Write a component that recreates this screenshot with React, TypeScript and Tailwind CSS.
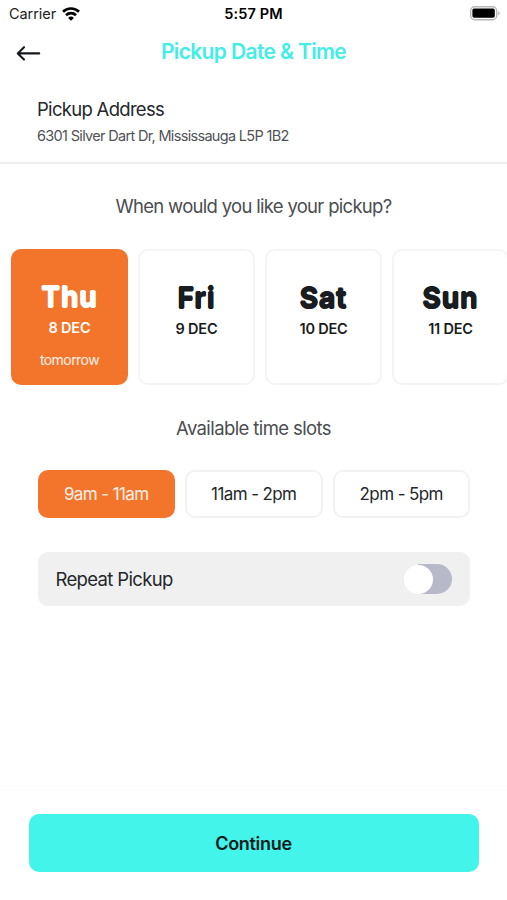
import { useState } from 'react'

const days = [
  { name: 'Thu', date: '8 DEC', note: 'tomorrow' },
  { name: 'Fri', date: '9 DEC' },
  { name: 'Sat', date: '10 DEC' },
  { name: 'Sun', date: '11 DEC' },
]

const slots = ['9am - 11am', '11am - 2pm', '2pm - 5pm']

function WifiIcon() {
  return (
    <svg width="18" height="14" viewBox="0 0 18 14" fill="none" stroke="#000" strokeWidth="2.7">
      <path d="M1 4.8a11.3 11.3 0 0 1 16 0" />
      <path d="M4 8.2a7.1 7.1 0 0 1 10 0" />
      <path d="M9 13.8 6.1 10.9a4.1 4.1 0 0 1 5.8 0Z" fill="#000" stroke="none" />
    </svg>
  )
}

function BatteryIcon() {
  return (
    <svg width="31" height="15" viewBox="0 0 31 15" fill="none">
      <rect x="0.7" y="0.7" width="26" height="13" rx="4" stroke="#b8b8b8" strokeWidth="1.4" />
      <rect x="2.4" y="2.5" width="22.4" height="9.2" rx="1.8" fill="#000" />
      <path d="M28.2 5.2v4.2c1.9-.7 1.9-3.5 0-4.2Z" fill="#b0b0b0" />
    </svg>
  )
}

function StatusBar() {
  return (
    <div className="grid h-7 grid-cols-3 items-center text-black">
      <div className="flex items-center gap-[6px] pl-[9px]">
        <span className="text-[14.5px] tracking-[-0.06px] text-[#222]">Carrier</span>
        <WifiIcon />
      </div>
      <span className="text-center text-[14.5px] font-semibold tracking-[0.15px]">5:57 PM</span>
      <div className="flex justify-end pr-[6px] pb-px">
        <BatteryIcon />
      </div>
    </div>
  )
}

function Header() {
  return (
    <header className="grid h-[52px] grid-cols-[60px_1fr_60px]">
      <button aria-label="Back" className="flex h-[50px] items-center pl-4">
        <svg width="25" height="16" viewBox="0 0 25 16" fill="none" stroke="#15181c" strokeWidth="2.1" strokeLinecap="round" strokeLinejoin="round">
          <path d="M23.2 8.4H1.8M8 2.2 1.8 8.4 8 14.6" />
        </svg>
      </button>
      <h1 className="pt-[10px] text-center text-[21px] leading-7 font-semibold tracking-[-0.63px] text-[#42eee6]">
        Pickup Date &amp; Time
      </h1>
    </header>
  )
}

export default function App() {
  const [day, setDay] = useState('Thu')
  const [slot, setSlot] = useState(slots[0])
  const [repeat, setRepeat] = useState(false)

  return (
    <div className="flex h-[900px] w-[507px] flex-col overflow-hidden bg-white font-['Inter',sans-serif] text-[#24272b]">
      <StatusBar />
      <Header />

      <section className="h-[84px] border-b-2 border-[#eeeeee] pt-[17px] pl-[37px]">
        <h2 className="text-[18.5px] leading-6 tracking-[-0.7px]">Pickup Address</h2>
        <p className="mt-[5px] text-[14.5px] leading-5 tracking-[-0.68px] text-[#515356]">
          6301 Silver Dart Dr, Mississauga L5P 1B2
        </p>
      </section>

      <h3 className="mt-[28px] text-center text-[18.5px] leading-7 tracking-[-0.7px] text-[#4b4d50]">
        When would you like your pickup?
      </h3>

      <div className="mt-[29px] flex gap-[10px] pl-[11px]">
        {days.map((d) => (
          <button
            key={d.name}
            onClick={() => setDay(d.name)}
            className={`flex h-[136px] w-[117px] shrink-0 flex-col items-center rounded-[10px] border-2 ${
              day === d.name
                ? 'border-[#f3752b] bg-[#f3752b] pt-[30px] text-white'
                : 'border-[#f4f4f4] bg-white pt-[31px] text-[#191c21]'
            }`}
          >
            {/* the ring of shadows thickens the glyphs and rounds their corners */}
            <span className="text-[28px] leading-8 font-bold tracking-[0.9px] [text-shadow:0.7px_0_currentColor,-0.7px_0_currentColor,0_0.7px_currentColor,0_-0.7px_currentColor]">
              {d.name}
            </span>
            <span className="mt-[5px] text-[14.5px] leading-5 font-semibold tracking-[-0.2px]">{d.date}</span>
            {d.note && <span className="mt-3 text-[14px] leading-5 tracking-[-0.55px] text-white/90">{d.note}</span>}
          </button>
        ))}
      </div>

      <h3 className="mt-[29px] text-center text-[18.5px] leading-7 tracking-[-0.6px] text-[#4b4d50]">Available time slots</h3>

      <div className="mt-7 grid grid-cols-3 gap-[10px] pr-[37px] pl-[37.5px]">
        {slots.map((s) => (
          <button
            key={s}
            onClick={() => setSlot(s)}
            className={`h-12 rounded-[10px] border-2 pt-px text-[17px] tracking-[-0.6px] ${
              slot === s ? 'border-[#f3752b] bg-[#f3752b] text-white/90' : 'border-[#f2f2f2] bg-white'
            }`}
          >
            {s}
          </button>
        ))}
      </div>

      <div className="mx-[37.5px] mt-[34px] flex h-[54px] items-center justify-between rounded-[10px] bg-[#f0f0f0] px-[18px]">
        <span className="pt-px text-[18.5px] tracking-[-0.65px]">Repeat Pickup</span>
        <button
          role="switch"
          aria-checked={repeat}
          aria-label="Repeat Pickup"
          onClick={() => setRepeat(!repeat)}
          className={`flex h-[30px] w-12 items-center rounded-full bg-linear-to-r from-transparent from-30% to-[#b7b9c8] to-30% ${
            repeat ? 'justify-end' : 'justify-start'
          }`}
        >
          <span className="size-[29px] rounded-full bg-white" />
        </button>
      </div>

      <footer className="mt-auto h-[114px] border-t border-[#fafafa] px-[28.5px] pt-[27px]">
        <button className="h-[58px] w-full rounded-[10px] bg-[#43f4eb] text-[18px] font-semibold tracking-[-0.3px] text-[#071b1b]">
          Continue
        </button>
      </footer>
    </div>
  )
}
